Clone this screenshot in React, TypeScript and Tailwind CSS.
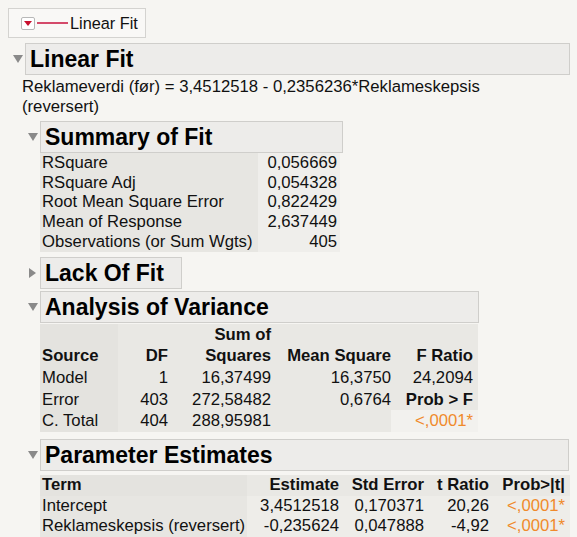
import React from 'react';

const Tri = ({ open = true }: { open?: boolean }) => (
    <span className="w-[15px] flex justify-center">
        {open ? (
            <svg width="10" height="8" viewBox="0 0 10 8"><path d="M0 0 L10 0 L5 8 Z" fill="#8a8a8a" /></svg>
        ) : (
            <svg width="7" height="10" viewBox="0 0 7 10"><path d="M0 0 L7 5 L0 10 Z" fill="#8a8a8a" /></svg>
        )}
    </span>
);

const Header = ({ title, open = true, width }: { title: string; open?: boolean; width: string }) => (
    <div className="flex items-center">
        <Tri open={open} />
        <div className={`${width} h-[32px] border border-[#cfcecb] bg-[#edecea] flex items-center pl-[4px] text-[23px] font-bold text-black`}>
            {title}
        </div>
    </div>
);

const summary = [
    ['RSquare', '0,056669'],
    ['RSquare Adj', '0,054328'],
    ['Root Mean Square Error', '0,822429'],
    ['Mean of Response', '2,637449'],
    ['Observations (or Sum Wgts)', '405'],
];

const anova = [
    ['Model', '1', '16,37499', '16,3750', '24,2094'],
    ['Error', '403', '272,58482', '0,6764', 'Prob > F'],
    ['C. Total', '404', '288,95981', '', '<,0001*'],
];

export default function App() {
    return (
        <div className="w-[577px] h-[537px] overflow-hidden bg-[#f6f5f2] text-[#111] text-[16.7px] leading-[20px]" style={{ fontFamily: '"Liberation Sans", Arial, sans-serif' }}>
            <div className="pt-[8px] pl-[8px]">
                <div className="w-[138px] h-[30px] border border-[#d4d3d0] bg-[#f9f8f6] flex items-center pl-[12px] gap-[2px]">
                    <span className="w-[14px] h-[13px] border border-[#b8b8b8] rounded-[2px] bg-white flex items-center justify-center">
                        <svg width="8" height="5" viewBox="0 0 8 5"><path d="M0 0 L8 0 L4 5 Z" fill="#c8102e" /></svg>
                    </span>
                    <span className="w-[31px] h-[2px] bg-[#d44a6a]" />
                    <span className="text-[16.3px]">Linear Fit</span>
                </div>
            </div>

            <div className="mt-[5px] pl-[10px] flex flex-col">
                <Header title="Linear Fit" width="w-[545px]" />
                <div className="pl-[12px] pt-[2px] leading-[19.5px]">
                    Reklameverdi (før) = 3,4512518 - 0,2356236*Reklameskepsis
                    <br />
                    (reversert)
                </div>

                <div className="pl-[15px] mt-[5px] flex flex-col">
                    <Header title="Summary of Fit" width="w-[303px]" />
                    <div className="ml-[15px] flex w-fit leading-[19.7px]">
                        <div className="bg-[#e7e6e2] pl-[2px] w-[218px]">
                            {summary.map(r => <div key={r[0]}>{r[0]}</div>)}
                        </div>
                        <div className="bg-[#efeeeb] w-[82px] text-right pr-[3px]">
                            {summary.map(r => <div key={r[0]}>{r[1]}</div>)}
                        </div>
                    </div>

                    <div className="mt-[5px]">
                        <Header title="Lack Of Fit" open={false} width="w-[142px]" />
                    </div>
                    <div className="mt-[2px]">
                        <Header title="Analysis of Variance" width="w-[439px]" />
                    </div>
                    <table className="ml-[15px] mt-[1px] bg-[#e9e8e4] border-separate border-spacing-0 leading-[21.7px] w-[438px]">
                        <thead>
                            <tr className="font-bold">
                                <th className="bg-[#e4e3df]" />
                                <th />
                                <th className="text-right">Sum of</th>
                                <th />
                                <th />
                            </tr>
                            <tr className="font-bold">
                                <th className="text-left pl-[2px] bg-[#e4e3df] w-[78px]">Source</th>
                                <th className="text-right w-[50px]">DF</th>
                                <th className="text-right w-[103px]">Squares</th>
                                <th className="text-right w-[120px]">Mean Square</th>
                                <th className="text-right pr-[5px]">F Ratio</th>
                            </tr>
                        </thead>
                        <tbody>
                            {anova.map(r => (
                                <tr key={r[0]}>
                                    <td className="pl-[2px] bg-[#e4e3df]">{r[0]}</td>
                                    <td className="text-right">{r[1]}</td>
                                    <td className="text-right">{r[2]}</td>
                                    <td className="text-right">{r[3]}</td>
                                    <td className={`text-right pr-[5px] ${r[4] === 'Prob > F' ? 'font-bold' : ''} ${r[4].startsWith('<') ? 'text-[#f08a2c] bg-[#f2f1ee]' : ''}`}>{r[4]}</td>
                                </tr>
                            ))}
                        </tbody>
                    </table>

                    <div className="mt-[7px]">
                        <Header title="Parameter Estimates" width="w-[529px]" />
                    </div>
                    <table className="ml-[15px] mt-[4px] border-separate border-spacing-0 leading-[20.5px] w-[530px]">
                        <thead>
                            <tr className="font-bold bg-[#e9e8e4]">
                                <th className="text-left pl-[2px] bg-[#e4e3df] w-[207px]">Term</th>
                                <th className="text-right w-[92px]">Estimate</th>
                                <th className="text-right w-[85px]">Std Error</th>
                                <th className="text-right w-[65px]">t Ratio</th>
                                <th className="text-right pr-[5px]">Prob&gt;|t|</th>
                            </tr>
                        </thead>
                        <tbody>
                            <tr>
                                <td className="pl-[2px] bg-[#e7e6e2]">Intercept</td>
                                <td className="text-right bg-[#eeede9]">3,4512518</td>
                                <td className="text-right bg-[#eeede9]">0,170371</td>
                                <td className="text-right bg-[#eeede9]">20,26</td>
                                <td className="text-right pr-[5px] text-[#f08a2c] bg-[#eeede9]">&lt;,0001*</td>
                            </tr>
                            <tr>
                                <td className="pl-[2px] bg-[#e7e6e2]">Reklameskepsis (reversert)</td>
                                <td className="text-right bg-[#eeede9]">-0,235624</td>
                                <td className="text-right bg-[#eeede9]">0,047888</td>
                                <td className="text-right bg-[#eeede9]">-4,92</td>
                                <td className="text-right pr-[5px] text-[#f08a2c] bg-[#eeede9]">&lt;,0001*</td>
                            </tr>
                        </tbody>
                    </table>
                </div>
            </div>
        </div>
    );
}
